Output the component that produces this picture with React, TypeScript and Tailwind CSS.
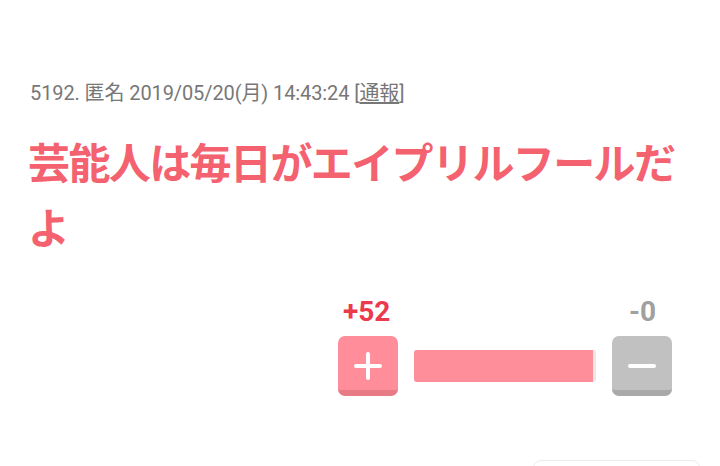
export default function App() {
  const plus = 52;
  const minus = 0;
  const ratio = plus / Math.max(plus + minus, 1);
  return (
    <div className="relative h-[466px] w-[720px] overflow-hidden bg-white font-['Roboto','Noto_Sans_CJK_JP',sans-serif]">
      <div className="px-[30px] pt-[79px]">
        <div className="text-[20px] leading-[28px] tracking-[-0.1px] text-[#777]">
          5192. 匿名 2019/05/20(月) 14:43:24 [<span className="underline underline-offset-2">通報</span>]
        </div>

        <h2 className="mt-[25px] w-[660px] text-[42px] font-bold leading-[65px] tracking-[-1.6px] text-[#f4616f] -ml-[2px]">
          芸能人は毎日がエイプリルフールだよ
        </h2>

        <div className="mt-[34px] flex justify-end pr-[18px]">
          <div className="flex flex-col">
            <div className="flex items-end justify-between pl-[5px] text-[28px] font-bold leading-[32px]">
              <span className="text-[#ea3a4b]">+{plus}</span>
              <span className="pr-[16px] text-[#a0a0a0]">-{minus}</span>
            </div>
            <div className="mt-[8px] flex items-center gap-4">
              <button className="flex h-[60px] w-[60px] items-center justify-center rounded-[7px] border-b-[6px] border-[#e77a85] bg-[#ff8e9a] pt-[5px]">
                <svg viewBox="0 0 30 30" className="h-[30px] w-[30px]" fill="none" stroke="white" strokeWidth="4" strokeLinecap="round">
                  <path d="M15 3v24M3 15h24" />
                </svg>
              </button>
              <div className="h-[32px] w-[182px] overflow-hidden rounded-[3px] bg-[#e8e8e8]">
                <div className="h-full bg-[#ff8e9b]" style={{ width: `${ratio * 98.3}%` }} />
              </div>
              <button className="flex h-[60px] w-[60px] items-center justify-center rounded-[7px] border-b-[6px] border-[#a9a9a9] bg-[#c1c1c1] pt-[5px]">
                <svg viewBox="0 0 30 30" className="h-[30px] w-[30px]" fill="none" stroke="white" strokeWidth="4" strokeLinecap="round">
                  <path d="M3 15h24" />
                </svg>
              </button>
            </div>
          </div>
        </div>
      </div>
      <div className="absolute left-[533px] top-[460px] h-[40px] w-[167px] rounded-[8px] border border-[#ececec]" />
    </div>
  );
}
